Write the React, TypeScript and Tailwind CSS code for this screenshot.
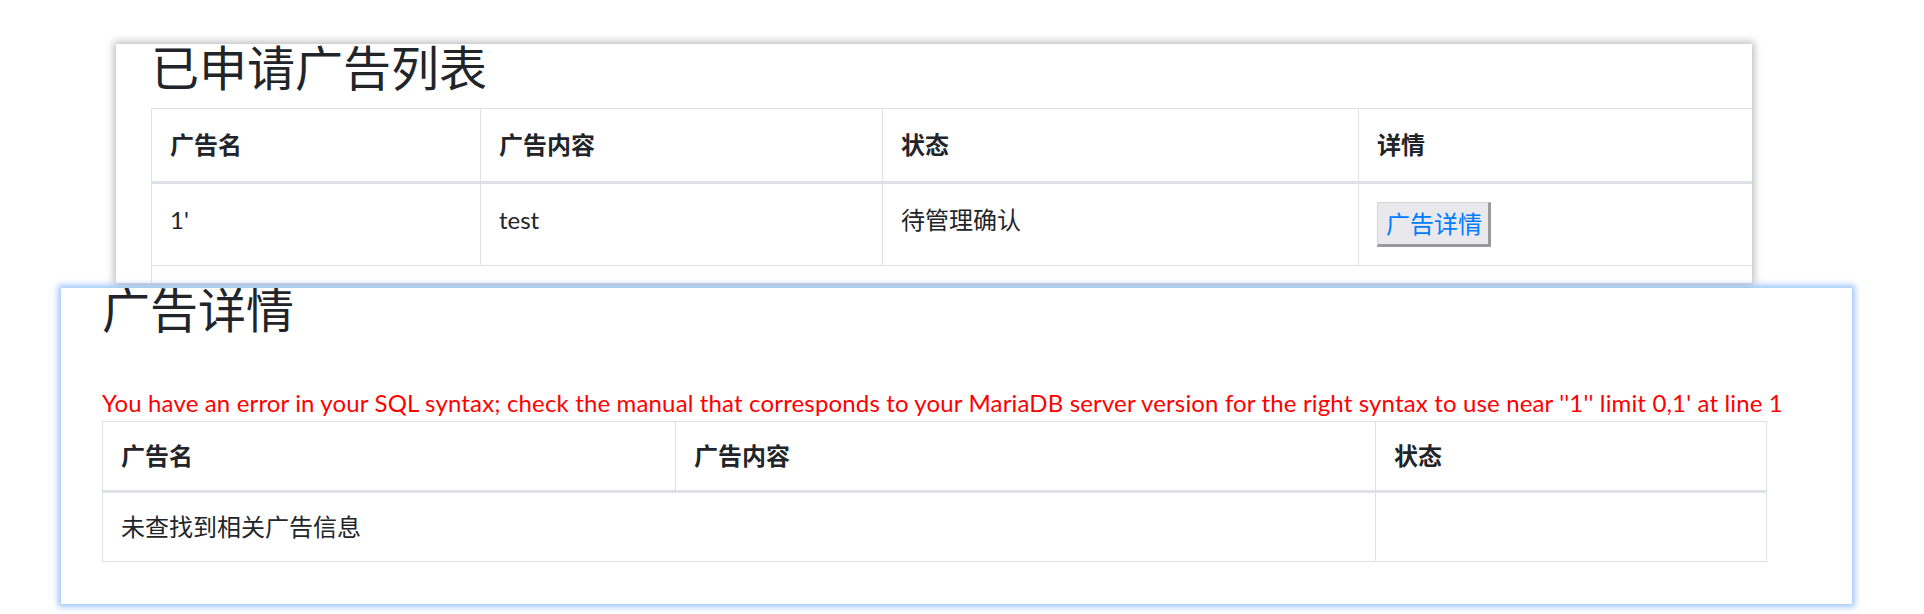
import React from 'react';

const font = "font-['Lato','Noto_Sans_CJK_SC',sans-serif]";

const AppliedAdsPanel = () => (
  <div className="ml-[116px] w-[1636px] h-[239px] overflow-hidden bg-white shadow-[0_0_8px_2px_rgba(0,0,0,0.28)]">
    <div className="pl-[35px]">
      <h1 className="text-[48px] leading-[48px] font-normal text-[#212529]">已申请广告列表</h1>
      <table className="mt-[16px] w-[1727px] min-w-[1727px] table-fixed border-collapse text-[24px] leading-[36px] text-[#212529]">
        <colgroup>
          <col className="w-[329px]" />
          <col className="w-[402px]" />
          <col className="w-[476px]" />
          <col className="w-[520px]" />
        </colgroup>
        <thead>
          <tr>
            <th className="border border-[#dee2e6] border-b-[3px] px-[18px] py-[18px] text-left font-bold">广告名</th>
            <th className="border border-[#dee2e6] border-b-[3px] px-[18px] py-[18px] text-left font-bold">广告内容</th>
            <th className="border border-[#dee2e6] border-b-[3px] px-[18px] py-[18px] text-left font-bold">状态</th>
            <th className="border border-[#dee2e6] border-b-[3px] px-[18px] py-[18px] text-left font-bold">详情</th>
          </tr>
        </thead>
        <tbody>
          <tr>
            <td className="border border-[#dee2e6] px-[18px] py-[18px] align-top">1'</td>
            <td className="border border-[#dee2e6] px-[18px] py-[18px] align-top">test</td>
            <td className="border border-[#dee2e6] px-[18px] py-[18px] align-top">待管理确认</td>
            <td className="border border-[#dee2e6] px-[18px] py-[18px] align-top">
              <button className="h-[45px] w-[114px] bg-[#e9e9ed] border-t border-l border-[#d6d6d6] border-b-[3px] border-r-[3px] border-b-[#999999] border-r-[#999999] pl-[8px] text-left text-[24px] leading-[36px] text-[#007bff]">
                广告详情
              </button>
            </td>
          </tr>
          <tr>
            <td colSpan={4} className="border border-[#dee2e6] h-[72px]"></td>
          </tr>
        </tbody>
      </table>
    </div>
  </div>
);

const AdDetailPanel = () => (
  <div className="relative z-10 mt-[5px] ml-[61px] w-[1791px] h-[316px] overflow-hidden bg-white shadow-[0_0_6px_3px_rgba(130,180,245,0.75)]">
    <div className="pl-[41px]">
      <h1 className="-mt-[2px] text-[48px] leading-[48px] font-normal text-[#212529]">广告详情</h1>
      <p className="mt-[51px] text-[24px] tracking-[0.15px] leading-[36px] text-[#ff0000] whitespace-nowrap">
        You have an error in your SQL syntax; check the manual that corresponds to your MariaDB server version for the right syntax to use near ''1'' limit 0,1' at line 1
      </p>
      <table className="w-[1664px] table-fixed border-collapse text-[24px] leading-[32px] text-[#212529]">
        <colgroup>
          <col className="w-[573px]" />
          <col className="w-[700px]" />
          <col className="w-[391px]" />
        </colgroup>
        <thead>
          <tr>
            <th className="border border-[#dee2e6] border-b-[3px] px-[18px] py-[18px] text-left font-bold">广告名</th>
            <th className="border border-[#dee2e6] border-b-[3px] px-[18px] py-[18px] text-left font-bold">广告内容</th>
            <th className="border border-[#dee2e6] border-b-[3px] px-[18px] py-[18px] text-left font-bold">状态</th>
          </tr>
        </thead>
        <tbody>
          <tr>
            <td colSpan={2} className="border border-[#dee2e6] px-[18px] py-[18px]">未查找到相关广告信息</td>
            <td className="border border-[#dee2e6] px-[18px] py-[18px]"></td>
          </tr>
        </tbody>
      </table>
    </div>
  </div>
);

export default function App() {
  return (
    <div className={`w-[1924px] h-[614px] overflow-hidden bg-white pt-[44px] ${font}`}>
      <AppliedAdsPanel />
      <AdDetailPanel />
    </div>
  );
}
